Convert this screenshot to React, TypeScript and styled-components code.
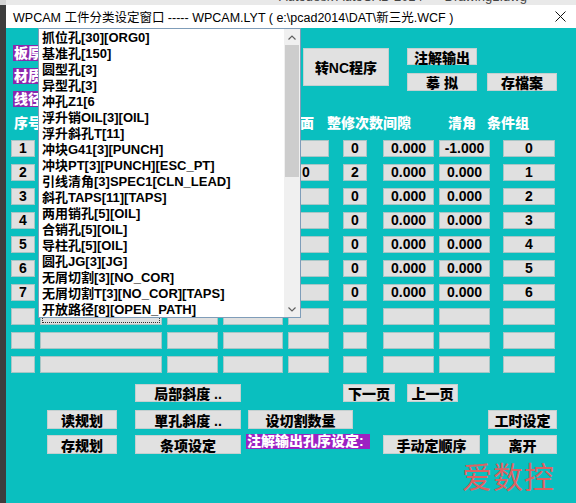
import React from "react";
import styled, { createGlobalStyle } from "styled-components";

const GlobalStyle = createGlobalStyle`
  html, body { margin: 0; padding: 0; }
  body {
    width: 576px; height: 503px; overflow: hidden; background: #3d3d3d;
    font-family: "Liberation Sans", "Noto Sans CJK SC", sans-serif;
  }
  * { box-sizing: border-box; }
`;

const TEAL = "#0abfbf";
const CJK = `"Liberation Sans", "Noto Sans CJK SC", sans-serif`;

const Screen = styled.div`
  display: flex;
  width: 576px;
  height: 503px;
`;

const LeftEdge = styled.div`
  width: 6px;
  flex: none;
  background: linear-gradient(#d4d4d4 0 5px, #3d3d3d 5px);
`;

const Main = styled.div`
  flex: 1;
  display: flex;
  flex-direction: column;
  min-width: 0;
`;

const DesktopStrip = styled.div`
  height: 5px;
  flex: none;
  overflow: hidden;
  background: #e9e9e9;
`;

const DesktopTitle = styled.div`
  margin: -10px 0 0 273px;
  font-size: 13px;
  line-height: 14px;
  color: #444;
  white-space: pre;
`;

const TitleBar = styled.div`
  height: 23px;
  flex: none;
  background: #fff;
  display: flex;
  align-items: center;
  justify-content: space-between;
  padding: 0 10px 0 7px;
  font-family: ${CJK};
  font-size: 12.5px;
  color: #000;
  white-space: nowrap;
`;

const Client = styled.div`
  position: relative;
  flex: 1;
  background: ${TEAL};
  display: flex;
  flex-direction: column;
  font-family: ${CJK};
  font-weight: 700;
  color: #000;
`;

const TopArea = styled.div`
  height: 84px;
  flex: none;
  display: flex;
  align-items: flex-start;
`;

const LabelCol = styled.div`
  margin: 17px 0 0 7px;
  width: 28px;
  display: flex;
  flex-direction: column;
  gap: 7px;
`;

const Tag = styled.div`
  height: 16px;
  line-height: 16px;
  background: #8b27ad;
  color: #fff;
  font-size: 14px;
  font-weight: 900;
  white-space: nowrap;
  overflow: hidden;
  padding-left: 1px;
`;

const Btn = styled.button<{ $w: number; $h?: number; $ml?: number; $mt?: number }>`
  flex: none;
  width: ${(p) => p.$w}px;
  height: ${(p) => p.$h ?? 19}px;
  margin: ${(p) => p.$mt ?? 0}px 0 0 ${(p) => p.$ml ?? 0}px;
  padding: 0;
  background: #e1e1e1;
  border: 1px solid #c4d0d0;
  border-radius: 0;
  display: flex;
  align-items: center;
  justify-content: center;
  font-family: ${CJK};
  font-size: 14px;
  font-weight: 900;
  color: #000;
  white-space: pre;
`;

const RightGrid = styled.div`
  margin: 20px 0 0 18px;
  display: grid;
  grid-template-columns: 70px 70px;
  grid-template-rows: 17px 18px;
  column-gap: 10px;
  row-gap: 8px;
  & > button { width: 100%; height: 100%; margin: 0; }
`;

const Header = styled.div`
  height: 28px;
  flex: none;
  display: grid;
  grid-template-columns: 8px 286px 27px 121px 39px 1fr;
  padding-top: 3px;
  line-height: 16px;
  font-size: 14px;
  font-weight: 900;
  color: #fff;
  white-space: nowrap;
`;

const HeadText = styled.span<{ $col: number }>`
  grid-column: ${(p) => p.$col};
`;

const Table = styled.div`
  display: flex;
  flex-direction: column;
  gap: 7px;
`;

const Row = styled.div`
  display: flex;
  height: 17px;
`;

const Cell = styled.div<{ $w: number; $ml: number; $left?: boolean; $focus?: boolean }>`
  flex: none;
  width: ${(p) => p.$w}px;
  margin-left: ${(p) => p.$ml}px;
  height: 17px;
  line-height: 15px;
  background: #e0e0e0;
  border: 1px solid #a7c6c6;
  font-family: "Liberation Sans", sans-serif;
  font-size: 14px;
  font-weight: 700;
  text-align: ${(p) => (p.$left ? "left" : "center")};
  padding-left: ${(p) => (p.$left ? 13 : 0)}px;
  outline: ${(p) => (p.$focus ? "1px dotted #333" : "none")};
  outline-offset: -3px;
  white-space: nowrap;
  overflow: hidden;
`;

const BtnRow = styled.div<{ $mt: number }>`
  display: flex;
  align-items: flex-start;
  margin-top: ${(p) => p.$mt}px;
`;

const PurpleLabel = styled.div<{ $w: number; $ml: number }>`
  flex: none;
  width: ${(p) => p.$w}px;
  margin: -1px 0 0 ${(p) => p.$ml}px;
  height: 15px;
  line-height: 15px;
  background: #9c22c2;
  color: #fff;
  font-size: 14px;
  font-weight: 900;
  white-space: nowrap;
  padding-left: 1px;
`;

const Watermark = styled.div`
  margin: 3px 0 0 456px;
  font-family: "Noto Sans CJK SC", sans-serif;
  font-size: 30px;
  line-height: 36px;
  font-weight: 400;
  color: #dc6262;
  letter-spacing: 1px;
  white-space: nowrap;
`;

const DropList = styled.div`
  position: absolute;
  left: 32px;
  top: 0;
  width: 263px;
  height: 290px;
  background: #fff;
  border: 1px solid #7f9db9;
  display: flex;
`;

const ItemList = styled.ul`
  list-style: none;
  margin: 0;
  padding: 1px 0 0 3px;
  flex: 1;
  min-width: 0;
`;

const Item = styled.li`
  height: 16px;
  line-height: 16px;
  font-family: ${CJK};
  font-size: 13px;
  font-weight: 700;
  color: #000;
  white-space: nowrap;
`;

const ScrollBar = styled.div`
  width: 16px;
  flex: none;
  background: #f0f0f0;
  display: flex;
  flex-direction: column;
`;

const ScrollArrow = styled.div`
  height: 16px;
  flex: none;
  display: flex;
  align-items: center;
  justify-content: center;
`;

const Thumb = styled.div`
  height: 132px;
  flex: none;
  background: #cdcdcd;
  margin: 0 1px;
`;

const Track = styled.div`
  flex: 1;
`;

const COLS = [
  { w: 24, ml: 5 },
  { w: 122, ml: 5 },
  { w: 51, ml: 5 },
  { w: 60, ml: 5 },
  { w: 41, ml: 5 },
  { w: 24, ml: 14 },
  { w: 51, ml: 16 },
  { w: 51, ml: 5 },
  { w: 52, ml: 13 },
];

const ROWS: string[][] = [
  ["1", "", "", "", "", "0", "0.000", "-1.000", "0"],
  ["2", "", "", "", "0", "2", "0.000", "0.000", "1"],
  ["3", "", "", "", "", "0", "0.000", "0.000", "2"],
  ["4", "", "", "", "", "0", "0.000", "0.000", "3"],
  ["5", "", "", "", "", "0", "0.000", "0.000", "4"],
  ["6", "", "", "", "", "0", "0.000", "0.000", "5"],
  ["7", "", "", "", "", "0", "0.000", "0.000", "6"],
  ["", "", "", "", "", "", "", "", ""],
  ["", "", "", "", "", "", "", "", ""],
  ["", "", "", "", "", "", "", "", ""],
];

const ITEMS = [
  "抓位孔[30][ORG0]",
  "基准孔[150]",
  "圆型孔[3]",
  "异型孔[3]",
  "冲孔Z1[6",
  "浮升销OIL[3][OIL]",
  "浮升斜孔T[11]",
  "冲块G41[3][PUNCH]",
  "冲块PT[3][PUNCH][ESC_PT]",
  "引线清角[3]SPEC1[CLN_LEAD]",
  "斜孔TAPS[11][TAPS]",
  "两用销孔[5][OIL]",
  "合销孔[5][OIL]",
  "导柱孔[5][OIL]",
  "圆孔JG[3][JG]",
  "无屑切割[3][NO_COR]",
  "无屑切割T[3][NO_COR][TAPS]",
  "开放路径[8][OPEN_PATH]",
];

const Chevron = ({ up }: { up?: boolean }) => (
  <svg width="8" height="5" viewBox="0 0 8 5">
    <path
      d={up ? "M0.5 4.5 L4 1 L7.5 4.5" : "M0.5 0.5 L4 4 L7.5 0.5"}
      fill="none"
      stroke="#606060"
      strokeWidth="1.2"
    />
  </svg>
);

const CloseIcon = () => (
  <svg width="11" height="11" viewBox="0 0 11 11">
    <path d="M0.5 0.5 L10.5 10.5 M10.5 0.5 L0.5 10.5" stroke="#111" strokeWidth="1" />
  </svg>
);

export default function App() {
  return (
    <>
      <GlobalStyle />
      <Screen>
        <LeftEdge />
        <Main>
          <DesktopStrip>
            <DesktopTitle>{"Autodesk AutoCAD 2014      Drawing1.dwg"}</DesktopTitle>
          </DesktopStrip>
          <TitleBar>
            <span>{"WPCAM 工件分类设定窗口 ----- WPCAM.LYT ( e:\\pcad2014\\DAT\\新三光.WCF )"}</span>
            <CloseIcon />
          </TitleBar>
          <Client>
            <TopArea>
              <LabelCol>
                <Tag>板厚</Tag>
                <Tag>材质</Tag>
                <Tag>线径</Tag>
              </LabelCol>
              <Btn $w={86} $h={38} $ml={262} $mt={20}>
                转NC程序
              </Btn>
              <RightGrid>
                <Btn $w={70}>注解输出</Btn>
                <span />
                <Btn $w={70}>{"摹 拟"}</Btn>
                <Btn $w={70}>存檔案</Btn>
              </RightGrid>
            </TopArea>
            <Header>
              <HeadText $col={2}>序号</HeadText>
              <HeadText $col={3}>面</HeadText>
              <HeadText $col={4}>整修次数间隙</HeadText>
              <HeadText $col={5}>清角</HeadText>
              <HeadText $col={6}>条件组</HeadText>
            </Header>
            <Table>
              {ROWS.map((r, ri) => (
                <Row key={ri}>
                  {r.map((v, ci) => (
                    <Cell
                      key={ci}
                      $w={COLS[ci].w}
                      $ml={COLS[ci].ml}
                      $left={ri === 1 && ci === 4}
                      $focus={ri === 7 && ci === 1}
                    >
                      {v}
                    </Cell>
                  ))}
                </Row>
              ))}
            </Table>
            <BtnRow $mt={11}>
              <Btn $w={106} $h={18} $ml={129}>{"局部斜度 .."}</Btn>
              <Btn $w={52} $h={18} $ml={102}>下一页</Btn>
              <Btn $w={51} $h={18} $ml={12}>上一页</Btn>
            </BtnRow>
            <BtnRow $mt={8}>
              <Btn $w={70} $ml={41}>读规划</Btn>
              <Btn $w={106} $ml={18}>{"單孔斜度 .."}</Btn>
              <Btn $w={105} $ml={7}>设切割数量</Btn>
              <Btn $w={69} $ml={135}>工时设定</Btn>
            </BtnRow>
            <BtnRow $mt={6}>
              <Btn $w={70} $ml={41}>存规划</Btn>
              <Btn $w={106} $ml={18}>条项设定</Btn>
              <PurpleLabel $w={124} $ml={5}>注解输出孔序设定:</PurpleLabel>
              <Btn $w={97} $ml={13}>手动定顺序</Btn>
              <Btn $w={69} $ml={8}>离开</Btn>
            </BtnRow>
            <Watermark>爱数控</Watermark>
            <DropList>
              <ItemList>
                {ITEMS.map((t) => (
                  <Item key={t}>{t}</Item>
                ))}
              </ItemList>
              <ScrollBar>
                <ScrollArrow>
                  <Chevron up />
                </ScrollArrow>
                <Thumb />
                <Track />
                <ScrollArrow>
                  <Chevron />
                </ScrollArrow>
              </ScrollBar>
            </DropList>
          </Client>
        </Main>
      </Screen>
    </>
  );
}
